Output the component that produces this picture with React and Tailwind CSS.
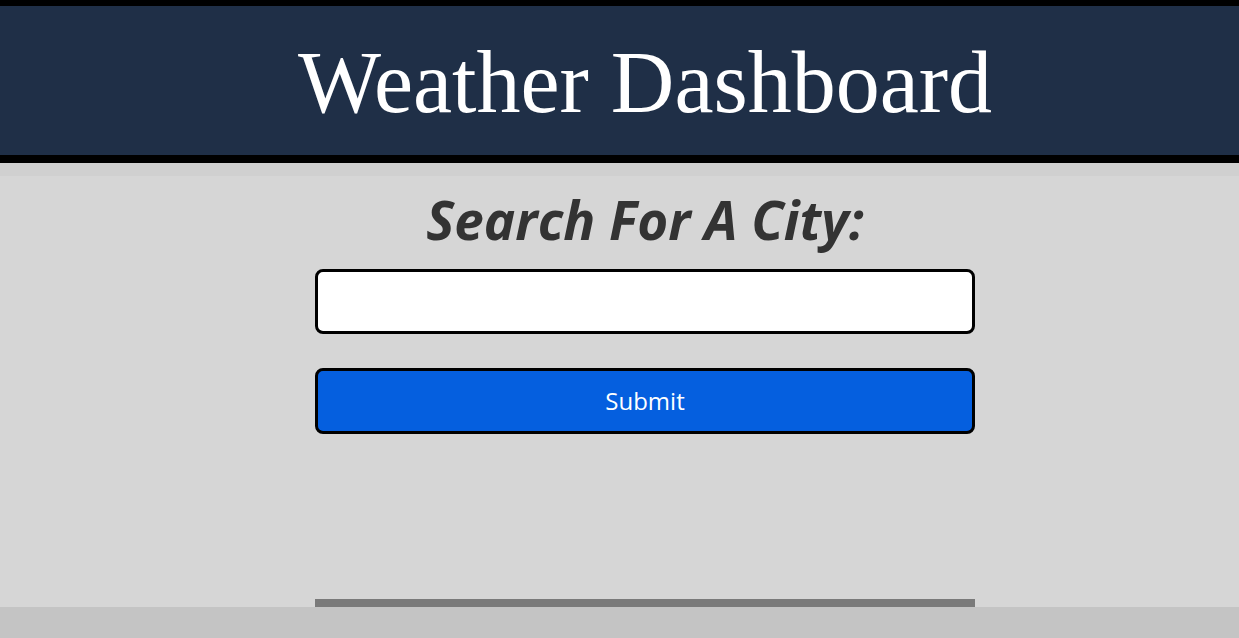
import React, { useState } from 'react';

export default function App() {
  const [city, setCity] = useState('');

  return (
    <div className="min-h-screen flex flex-col bg-[#d6d6d6]">
      <header className="h-[163px] bg-[#1f2f47] border-t-[6px] border-b-[8px] border-black flex items-center justify-center pl-[51px]">
        <h1 className="text-[88px] leading-none text-white font-['Liberation_Serif',serif] pt-[4px]">
          Weather Dashboard
        </h1>
      </header>

      <main className="flex-1 border-t-[13px] border-[#d0d0d0] pl-[51px]">
        <div className="w-[660px] mx-auto flex flex-col">
          <h2 className="mt-[13px] text-center text-[53px] leading-[61px] font-bold italic text-[#333333] font-['Open_Sans',sans-serif]">
            Search For A City:
          </h2>
          <form className="flex flex-col" onSubmit={(e) => e.preventDefault()}>
            <input
              type="text"
              value={city}
              onChange={(e) => setCity(e.target.value)}
              className="mt-[19px] h-[65px] bg-white border-[3px] border-black rounded-[8px] px-3 text-2xl outline-none"
            />
            <button
              type="submit"
              className="mt-[34px] h-[66px] bg-[#055fdf] border-[3px] border-black rounded-[8px] text-white text-[24px] font-['Open_Sans',sans-serif]"
            >
              Submit
            </button>
          </form>
          <div className="mt-[165px] h-[8px] bg-[#7a7a7a]" />
        </div>
      </main>

      <footer className="h-[31px] bg-[#c4c4c4]" />
    </div>
  );
}
